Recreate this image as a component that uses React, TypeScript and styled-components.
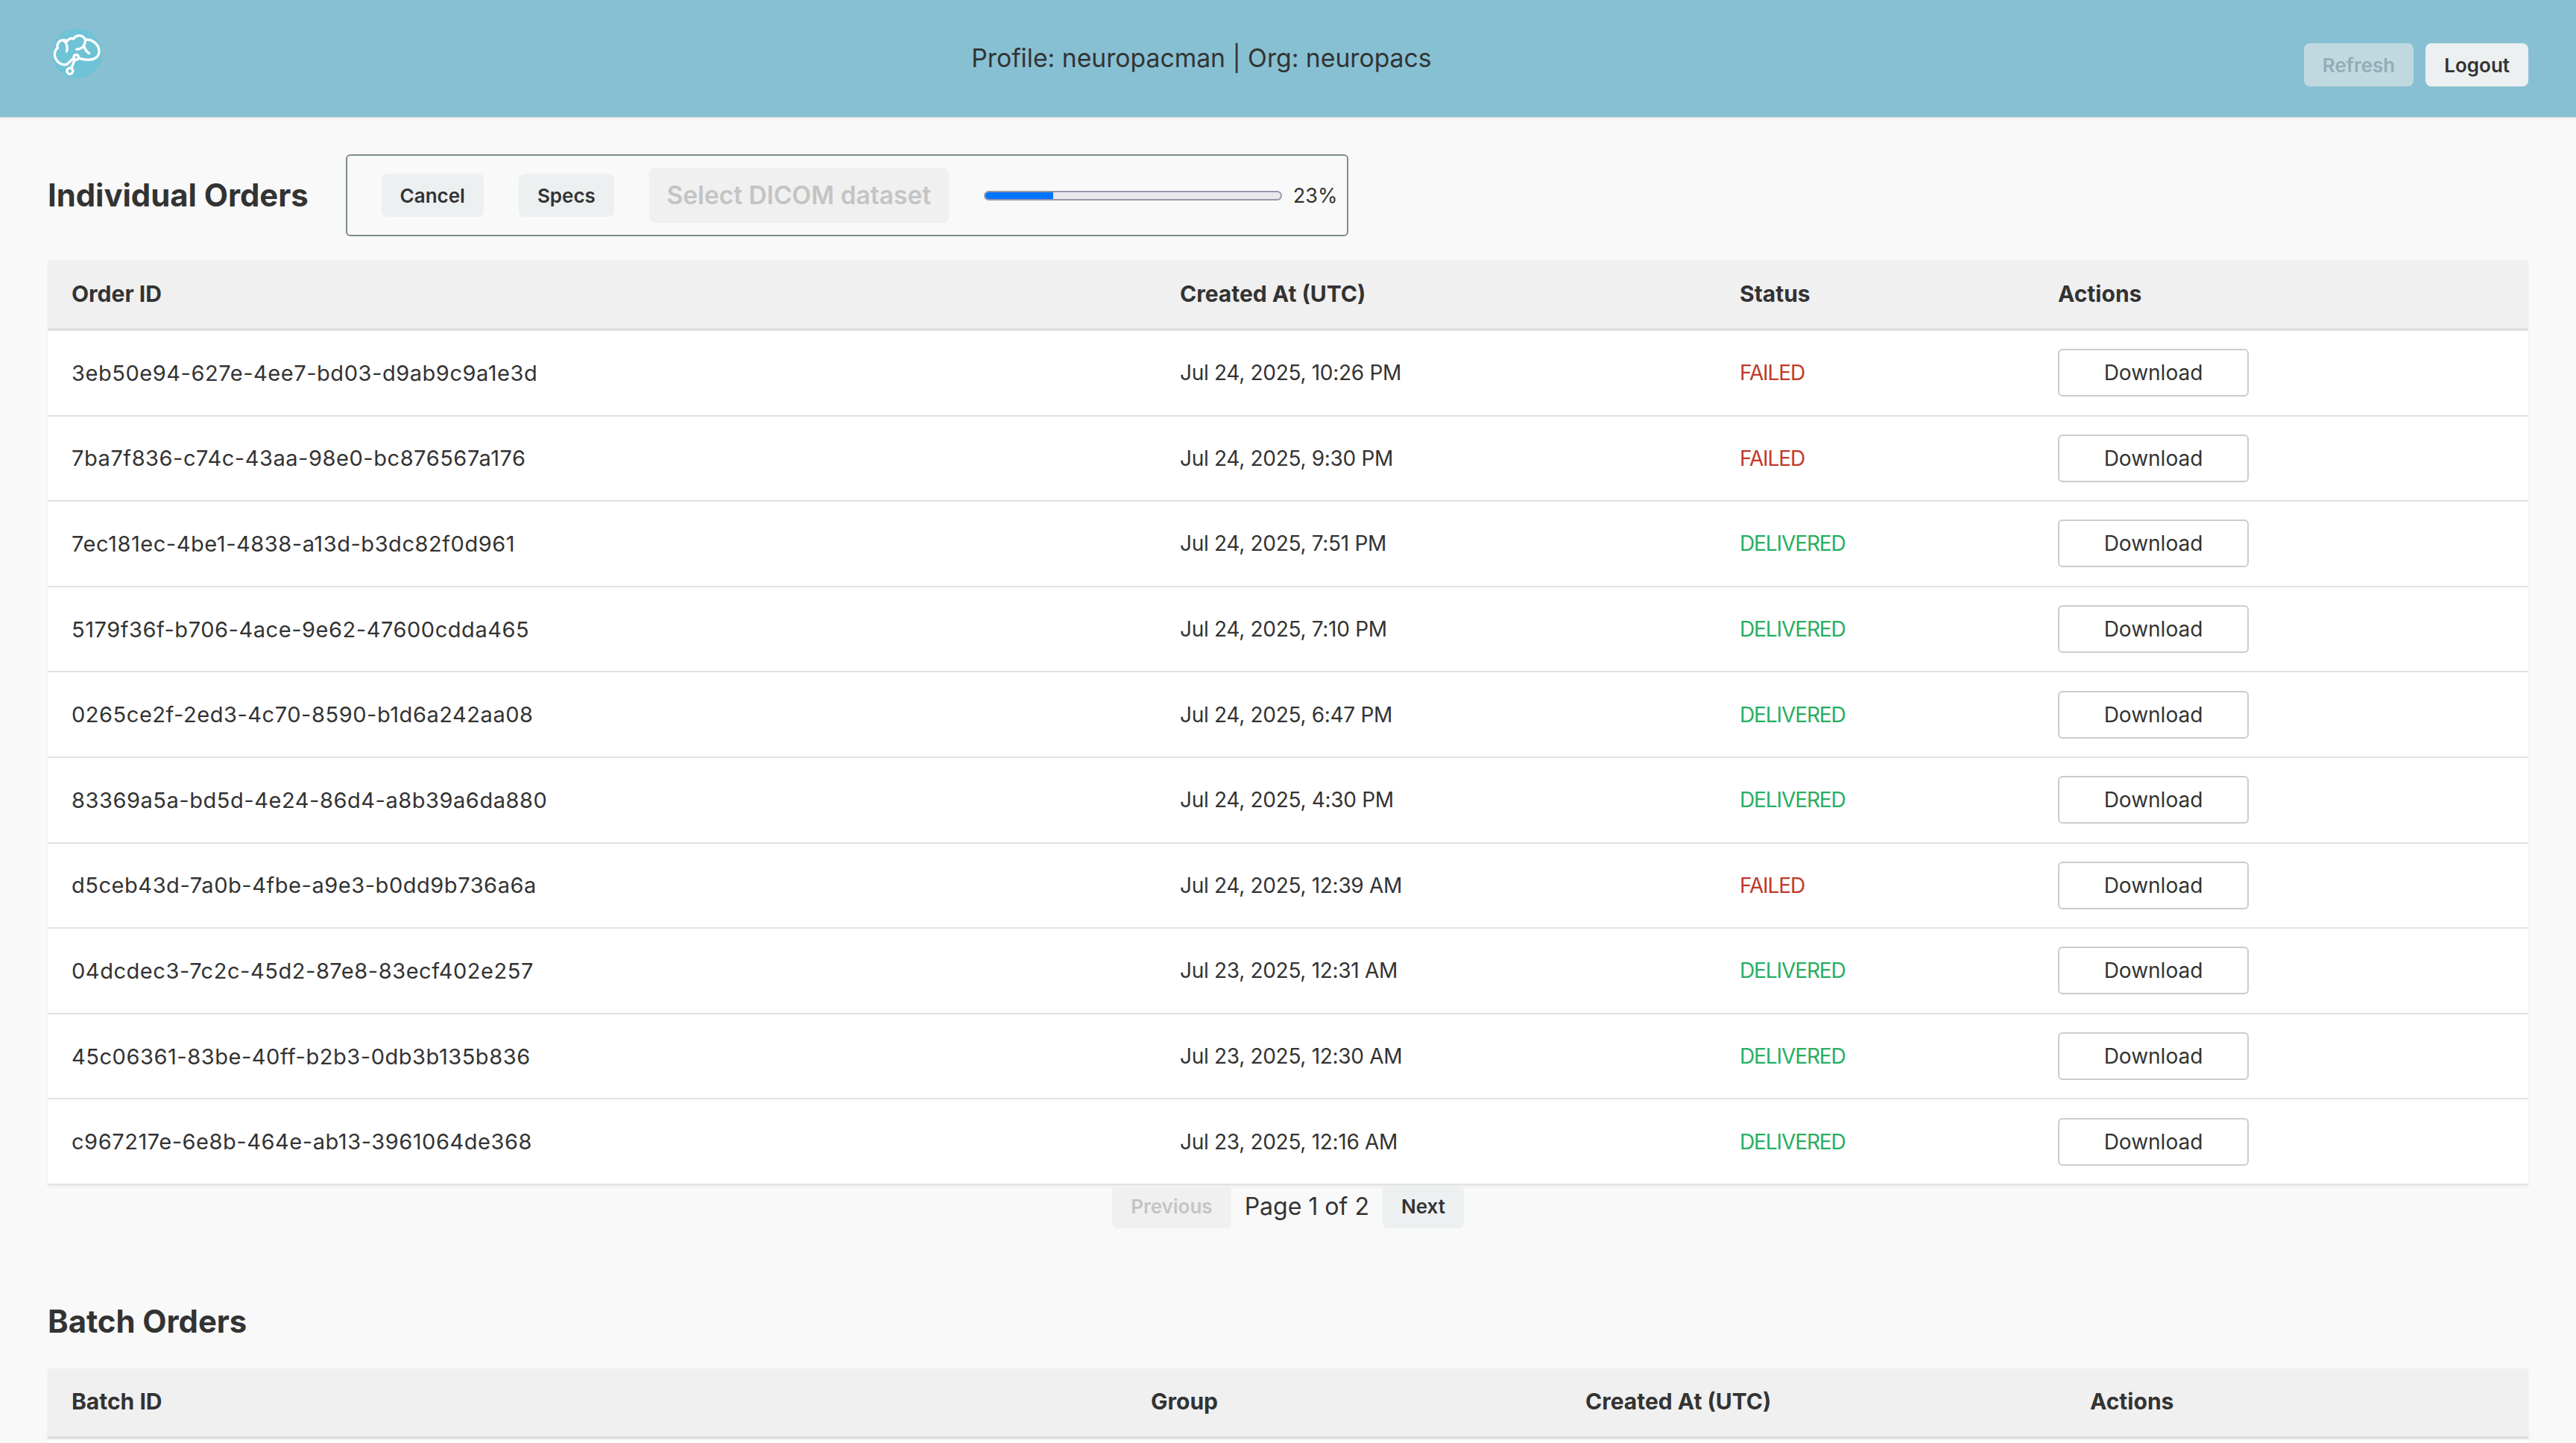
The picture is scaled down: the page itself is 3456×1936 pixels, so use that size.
import styled, { createGlobalStyle } from "styled-components";

const GlobalStyle = createGlobalStyle`
  html, body {
    margin: 0;
    background: #f9f9f9;
    color: #333;
    font-family: Inter, "Liberation Sans", sans-serif;
  }
`;

const orderCols = "1487px 751px 427px 663px";
const batchCols = "1448px 583px 677px 620px";

const orders = [
  ["3eb50e94-627e-4ee7-bd03-d9ab9c9a1e3d", "Jul 24, 2025, 10:26 PM", "FAILED"],
  ["7ba7f836-c74c-43aa-98e0-bc876567a176", "Jul 24, 2025, 9:30 PM", "FAILED"],
  ["7ec181ec-4be1-4838-a13d-b3dc82f0d961", "Jul 24, 2025, 7:51 PM", "DELIVERED"],
  ["5179f36f-b706-4ace-9e62-47600cdda465", "Jul 24, 2025, 7:10 PM", "DELIVERED"],
  ["0265ce2f-2ed3-4c70-8590-b1d6a242aa08", "Jul 24, 2025, 6:47 PM", "DELIVERED"],
  ["83369a5a-bd5d-4e24-86d4-a8b39a6da880", "Jul 24, 2025, 4:30 PM", "DELIVERED"],
  ["d5ceb43d-7a0b-4fbe-a9e3-b0dd9b736a6a", "Jul 24, 2025, 12:39 AM", "FAILED"],
  ["04dcdec3-7c2c-45d2-87e8-83ecf402e257", "Jul 23, 2025, 12:31 AM", "DELIVERED"],
  ["45c06361-83be-40ff-b2b3-0db3b135b836", "Jul 23, 2025, 12:30 AM", "DELIVERED"],
  ["c967217e-6e8b-464e-ab13-3961064de368", "Jul 23, 2025, 12:16 AM", "DELIVERED"],
];

export default function App() {
  const progress = 23;

  return (
    <>
      <GlobalStyle />
      <Header>
        <BrainLogo />
        <Profile>Profile: neuropacman | Org: neuropacs</Profile>
        <HeaderActions>
          <Button disabled $header>Refresh</Button>
          <Button>Logout</Button>
        </HeaderActions>
      </Header>
      <Main>
        <SectionHead>
          <SectionTitle>Individual Orders</SectionTitle>
          <UploadBox>
            <Button>Cancel</Button>
            <Button>Specs</Button>
            <SelectButton disabled>Select DICOM dataset</SelectButton>
            <ProgressTrack>
              <ProgressFill style={{ width: `${progress}%` }} />
            </ProgressTrack>
            <ProgressLabel>{progress}%</ProgressLabel>
          </UploadBox>
        </SectionHead>

        <Table>
          <HeadRow $cols={orderCols}>
            <HeadCell>Order ID</HeadCell>
            <HeadCell>Created At (UTC)</HeadCell>
            <HeadCell>Status</HeadCell>
            <HeadCell>Actions</HeadCell>
          </HeadRow>
          {orders.map(([id, created, status]) => (
            <Row key={id} $cols={orderCols}>
              <IdCell>{id}</IdCell>
              <DateCell>{created}</DateCell>
              <StatusCell $failed={status === "FAILED"}>{status}</StatusCell>
              <Cell>
                <DownloadButton>Download</DownloadButton>
              </Cell>
            </Row>
          ))}
        </Table>

        <Pagination>
          <Button disabled>Previous</Button>
          <PageLabel>Page 1 of 2</PageLabel>
          <Button>Next</Button>
        </Pagination>

        <BatchTitle>Batch Orders</BatchTitle>
        <Table>
          <HeadRow $cols={batchCols}>
            <HeadCell>Batch ID</HeadCell>
            <HeadCell>Group</HeadCell>
            <HeadCell>Created At (UTC)</HeadCell>
            <HeadCell>Actions</HeadCell>
          </HeadRow>
          <EmptyBody />
        </Table>
      </Main>
    </>
  );
}

function BrainLogo() {
  return (
    <LogoSvg viewBox="0 0 200 200">
      <circle cx="100" cy="100" r="100" fill="#6fc3d6" />
      <g fill="none" stroke="#fff" strokeWidth="10" strokeLinecap="round" strokeLinejoin="round">
        <path d="M86 122 C72 124 68 146 50 146 C30 146 10 126 10 104 C10 92 15 84 22 79 C17 64 27 48 44 47 C50 47 56 48 60 52 C64 42 76 38 86 42 C92 28 114 24 126 36 C129 39 131 42 133 46 C160 42 188 64 188 92 C188 114 170 126 142 126 C130 126 118 124 106 120" />
        <path d="M44 47 C58 56 64 76 58 92" />
        <path d="M133 46 C132 66 122 84 98 84" />
        <path d="M127 70 C131 84 138 94 148 100" />
        <circle cx="96" cy="116" r="10" />
        <path d="M90 126 L77 159" />
        <circle cx="71" cy="171" r="12" />
      </g>
    </LogoSvg>
  );
}

const Header = styled.header`
  box-sizing: border-box;
  height: 159px;
  display: flex;
  justify-content: space-between;
  align-items: flex-start;
  padding: 0 64px;
  background: #87c0d3;
  border-bottom: 2px solid #e6e6e6;
`;

const LogoSvg = styled.svg`
  width: 67px;
  height: 67px;
  margin: 38px 0 0 6px;
`;

const Profile = styled.div`
  margin: 56px 4px 0 0;
  font-size: 33.7px;
  line-height: 44px;
  color: #333;
`;

const HeaderActions = styled.div`
  display: flex;
  gap: 16px;
  margin-top: 58px;
`;

const Button = styled.button<{ $header?: boolean }>`
  box-sizing: border-box;
  flex: none;
  height: 58px;
  padding: 0 25px;
  border: none;
  border-radius: 8px;
  background: #ecf0f1;
  color: #333;
  font-family: inherit;
  font-size: 26px;
  font-weight: 600;

  &:disabled {
    background: ${({ $header }) => ($header ? "#c0d9e1" : "#f0f0f0")};
    color: ${({ $header }) => ($header ? "#94adb5" : "#c4c4c4")};
  }
`;

const Main = styled.main`
  padding: 48px 64px 0;
`;

const SectionHead = styled.div`
  display: flex;
  align-items: center;
  gap: 50px;
  margin-bottom: 32px;
`;

const SectionTitle = styled.h2`
  margin: 0;
  font-size: 41.8px;
  font-weight: 700;
  line-height: 56px;
`;

const BatchTitle = styled(SectionTitle)`
  margin: 97px 0 35px;
`;

const UploadBox = styled.div`
  box-sizing: border-box;
  width: 1345px;
  height: 110px;
  flex: none;
  display: flex;
  align-items: center;
  padding: 0 14px 0 46px;
  gap: 47px;
  border: 2px solid #7c8c8c;
  border-radius: 6px;
`;

const SelectButton = styled(Button)`
  height: 74px;
  width: 402px;
  padding: 0;
  font-size: 33.5px;
`;

const ProgressTrack = styled.div`
  box-sizing: border-box;
  width: 400px;
  height: 13px;
  flex: none;
  overflow: hidden;
  background: #e9e9ed;
  border: 2px solid #9a97a8;
  border-radius: 7px;
`;

const ProgressFill = styled.div`
  height: 100%;
  background: #0075ff;
`;

const ProgressLabel = styled.span`
  margin-left: -32px;
  font-size: 27px;
`;

const Table = styled.div`
  background: #fff;
  box-shadow: 0 2px 4px rgba(0, 0, 0, 0.06);
`;

const HeadRow = styled.div<{ $cols: string }>`
  display: grid;
  grid-template-columns: ${({ $cols }) => $cols};
  align-items: center;
  height: 95px;
  padding-bottom: 2px;
  box-sizing: border-box;
  background: #f0f0f0;
  border-bottom: 4px solid #e0e0e0;
`;

const Row = styled.div<{ $cols: string }>`
  display: grid;
  grid-template-columns: ${({ $cols }) => $cols};
  align-items: center;
  height: 114.6px;
  box-sizing: border-box;
  background: #fff;
  border-bottom: 2px solid #e2e2e2;
`;

const HeadCell = styled.div`
  padding-left: 32px;
  font-size: 30px;
  font-weight: 700;
`;

const Cell = styled.div`
  padding-left: 32px;
  font-size: 28px;
`;

const IdCell = styled(Cell)`
  font-size: 29px;
  letter-spacing: 0.55px;
`;

const DateCell = styled(Cell)`
  letter-spacing: -0.3px;
`;

const StatusCell = styled(Cell)<{ $failed: boolean }>`
  color: ${({ $failed }) => ($failed ? "#c0392b" : "#27ae60")};
  letter-spacing: -1.1px;
`;

const DownloadButton = styled.button`
  box-sizing: border-box;
  width: 256px;
  height: 64px;
  background: #fff;
  border: 2px solid #ccc;
  border-radius: 6px;
  color: #333;
  font-family: inherit;
  font-size: 28px;
`;

const Pagination = styled.div`
  display: flex;
  justify-content: center;
  align-items: center;
  gap: 18px;
`;

const PageLabel = styled.span`
  font-size: 32px;
`;

const EmptyBody = styled.div`
  height: 5px;
`;
